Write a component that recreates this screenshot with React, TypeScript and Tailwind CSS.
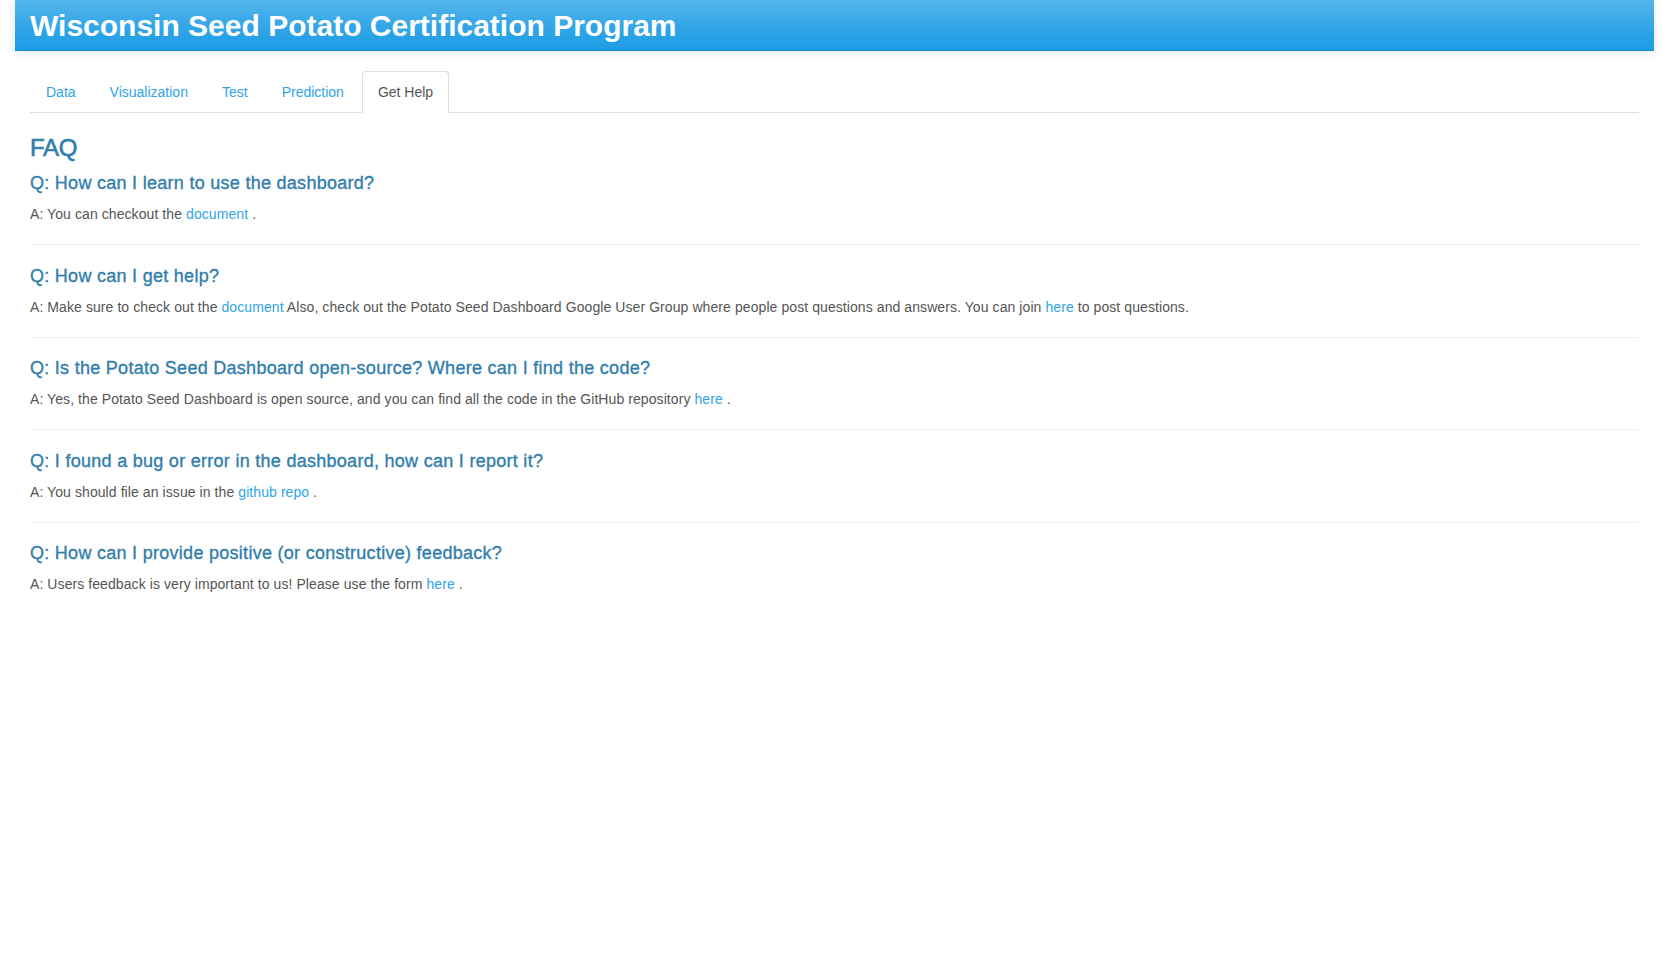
import type { ReactNode } from "react";

const tabs = ["Data", "Visualization", "Test", "Prediction", "Get Help"];
const activeTab = "Get Help";

function A({ children }: { children: ReactNode }) {
  return <a className="text-[#2fa4e7] no-underline">{children}</a>;
}

const faqs: { q: string; a: ReactNode }[] = [
  {
    q: "Q: How can I learn to use the dashboard?",
    a: (
      <>
        A: You can checkout the <A>document</A> .
      </>
    ),
  },
  {
    q: "Q: How can I get help?",
    a: (
      <>
        A: Make sure to check out the <A>document</A> Also, check out the Potato Seed Dashboard Google User Group
        where people post questions and answers. You can join <A>here</A> to post questions.
      </>
    ),
  },
  {
    q: "Q: Is the Potato Seed Dashboard open-source? Where can I find the code?",
    a: (
      <>
        A: Yes, the Potato Seed Dashboard is open source, and you can find all the code in the GitHub repository{" "}
        <A>here</A> .
      </>
    ),
  },
  {
    q: "Q: I found a bug or error in the dashboard, how can I report it?",
    a: (
      <>
        A: You should file an issue in the <A>github repo</A> .
      </>
    ),
  },
  {
    q: "Q: How can I provide positive (or constructive) feedback?",
    a: (
      <>
        A: Users feedback is very important to us! Please use the form <A>here</A> .
      </>
    ),
  },
];

export default function App() {
  return (
    <div className="min-h-screen bg-white px-[15px] font-['Liberation_Sans',Arial,sans-serif] text-[14px] text-[#555]">
      <header className="flex h-[51px] items-center border-b border-[#178acc] bg-[linear-gradient(#54b4eb,#2fa4e7_60%,#1d9ce5)] px-[15px] shadow-[0_1px_10px_rgba(0,0,0,0.1)]">
        <h1 className="text-[30px] font-bold leading-[33px] text-white">Wisconsin Seed Potato Certification Program</h1>
      </header>

      <div className="px-[15px]">
        <ul className="mt-5 flex border-b border-[#ddd]">
          {tabs.map((t) => (
            <li key={t} className="-mb-px">
              <a
                className={
                  t === activeTab
                    ? "mr-[2px] block rounded-t border border-[#ddd] border-b-transparent bg-white px-[15px] py-[10px] leading-5 text-[#555]"
                    : "mr-[2px] block rounded-t border border-transparent px-[15px] py-[10px] leading-5 text-[#2fa4e7]"
                }
              >
                {t}
              </a>
            </li>
          ))}
        </ul>

        <h3 className="mt-[22px] text-[24px] leading-[26px] tracking-[-0.3px] text-[#317eac] [-webkit-text-stroke:0.6px_#317eac]">
          FAQ
        </h3>

        <div className="tracking-[0.08px]">
          {faqs.map((f, i) => (
            <section key={i}>
              <h4
                className={
                  (i === 0 ? "mt-3" : "mt-[20.5px]") +
                  " text-[18px] leading-5 tracking-[0.28px] text-[#317eac] [-webkit-text-stroke:0.35px_#317eac]"
                }
              >
                {f.q}
              </h4>
              <p className="mt-[11px] leading-5">{f.a}</p>
              {i < faqs.length - 1 && <hr className="mt-5 border-t border-[#eee]" />}
            </section>
          ))}
        </div>
      </div>
    </div>
  );
}
